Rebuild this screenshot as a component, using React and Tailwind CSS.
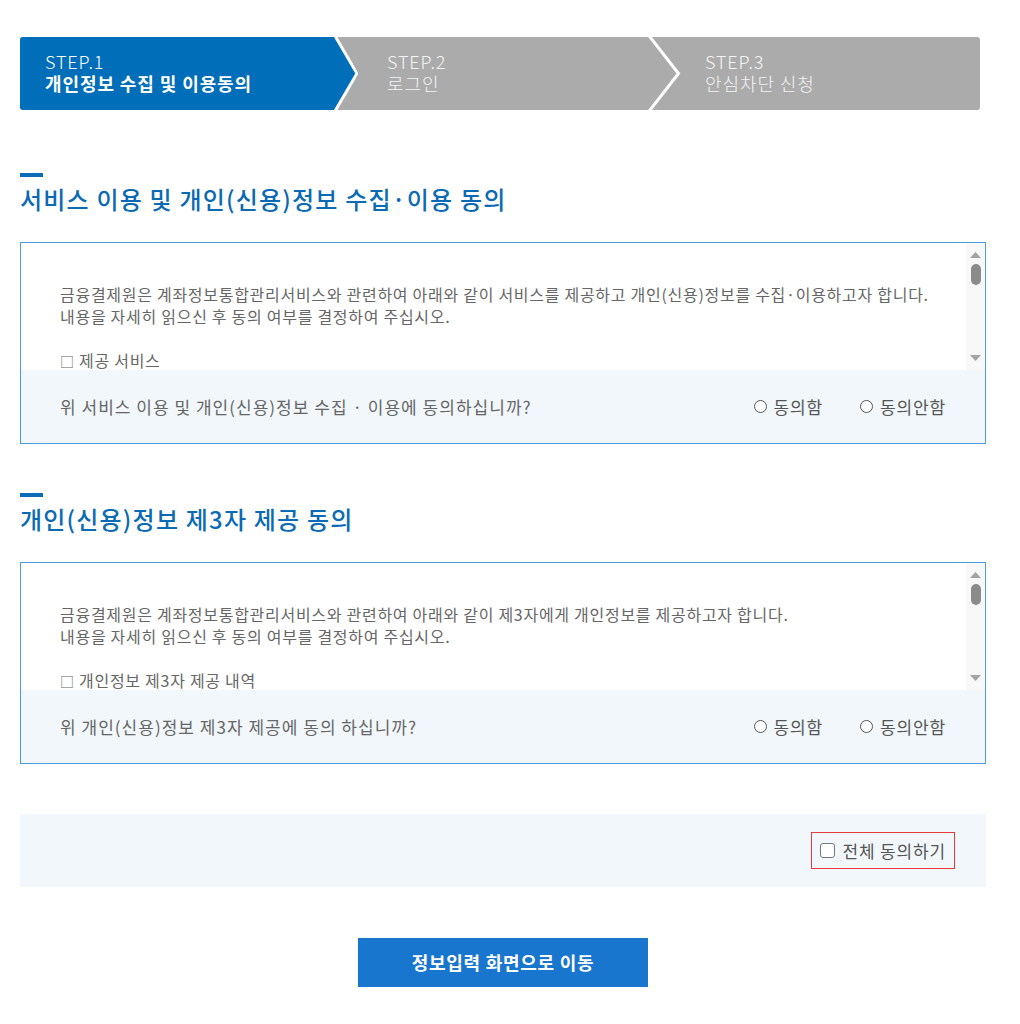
import React from 'react';

const FONT = "font-['Noto_Sans_CJK_KR','Noto_Sans',sans-serif]";

const steps = [
  { no: 'STEP.1', label: '개인정보 수집 및 이용동의', width: 'w-[342px]', active: true },
  { no: 'STEP.2', label: '로그인', width: 'w-[318px]' },
  { no: 'STEP.3', label: '안심차단 신청', width: 'flex-1' },
];

const StepBar = () => (
  <div className="relative flex h-[73px] w-[960px] overflow-hidden rounded-[3px] bg-[#ababab]">
    {steps.map((s) =>
      s.active ? (
        <div
          key={s.no}
          className={`${s.width} flex flex-col justify-center bg-[#006eb9] pb-[4px] pl-[25px] text-white [clip-path:polygon(0_0,316px_0,339px_50%,316px_100%,0_100%)]`}
        >
          <span className="text-[18px] leading-[22px] font-light tracking-[0.05em]">{s.no}</span>
          <span className="text-[18px] leading-[22px] font-bold tracking-[0.05em]">{s.label}</span>
        </div>
      ) : (
        <div key={s.no} className={`${s.width} flex flex-col justify-center pb-[4px] pl-[25px] text-[#f4f4f4]`}>
          <span className="text-[18px] leading-[22px] font-light tracking-[0.05em]">{s.no}</span>
          <span className="text-[18px] leading-[22px] font-light tracking-[0.05em]">{s.label}</span>
        </div>
      )
    )}
    {/* white chevrons between the steps */}
    <svg className="pointer-events-none absolute inset-0" width="960" height="73" viewBox="0 0 960 73">
      <polyline points="314.5,-2 337,36.5 314.5,75" fill="none" stroke="#fff" strokeWidth="3" />
      <polyline points="628.5,-2 658.5,36.5 628.5,75" fill="none" stroke="#fff" strokeWidth="3" />
    </svg>
  </div>
);

const SectionTitle = ({ children }) => (
  <div>
    <div className="h-[4px] w-[23px] bg-[#0b6db8]" />
    <h2 className="mt-[6px] text-[24px] leading-[32px] font-medium tracking-[0.05em] text-[#0b6ab4]">{children}</h2>
  </div>
);

const FakeScrollbar = () => (
  <div className="flex w-[19px] flex-col items-center bg-[#f8f8f8]">
    <svg className="mt-[9px]" width="11" height="6" viewBox="0 0 11 6">
      <path d="M0 6 L5.5 0 L11 6 Z" fill="#a3a3a3" />
    </svg>
    <div className="mt-[6px] h-[21px] w-[10px] rounded-full bg-[#8a8a8a]" />
    <div className="flex-1" />
    <svg className="mb-[9px]" width="11" height="6" viewBox="0 0 11 6">
      <path d="M0 0 L11 0 L5.5 6 Z" fill="#a3a3a3" />
    </svg>
  </div>
);

const Radio = ({ label }) => (
  <label className="flex items-center gap-[7px] text-[17px] tracking-[0.05em] text-[#555]">
    <span className="h-[13px] w-[13px] rounded-full border border-[#555] bg-white" />
    {label}
  </label>
);

const AgreeBox = ({ lines, item, question }) => (
  <div className="mt-[27px] border border-[#4b9bdc]">
    <div className="flex h-[127px]">
      <div className="flex-1 overflow-hidden pl-[39px] pt-[40px] text-[16px] leading-[22px] tracking-[0.045em] text-[#666]">
        {lines.map((l) => (
          <p key={l}>{l}</p>
        ))}
        <p className="mt-[22px]">
          <span className="text-[14px]">□</span> {item}
        </p>
      </div>
      <FakeScrollbar />
    </div>
    <div className="flex h-[73px] items-center justify-between bg-[#f1f7fb] pl-[39px] pr-[39px]">
      <span className="text-[17px] tracking-[0.06em] text-[#666]">{question}</span>
      <div className="flex items-center gap-[37px]">
        <Radio label="동의함" />
        <Radio label="동의안함" />
      </div>
    </div>
  </div>
);

export default function App() {
  return (
    <div className={`${FONT} min-h-[1024px] bg-white pl-[20px] pt-[37px]`}>
      <div className="w-[966px]">
        <StepBar />

        <div className="mt-[63px]">
          <SectionTitle>서비스 이용 및 개인(신용)정보 수집·이용 동의</SectionTitle>
          <AgreeBox
            lines={[
              '금융결제원은 계좌정보통합관리서비스와 관련하여 아래와 같이 서비스를 제공하고 개인(신용)정보를 수집·이용하고자 합니다.',
              '내용을 자세히 읽으신 후 동의 여부를 결정하여 주십시오.',
            ]}
            item="제공 서비스"
            question="위 서비스 이용 및 개인(신용)정보 수집 · 이용에 동의하십니까?"
          />
        </div>

        <div className="mt-[49px]">
          <SectionTitle>개인(신용)정보 제3자 제공 동의</SectionTitle>
          <AgreeBox
            lines={[
              '금융결제원은 계좌정보통합관리서비스와 관련하여 아래와 같이 제3자에게 개인정보를 제공하고자 합니다.',
              '내용을 자세히 읽으신 후 동의 여부를 결정하여 주십시오.',
            ]}
            item="개인정보 제3자 제공 내역"
            question="위 개인(신용)정보 제3자 제공에 동의 하십니까?"
          />
        </div>

        <div className="mt-[50px] flex h-[73px] items-center justify-end bg-[#f1f7fb] pr-[31px]">
          <label className="flex h-[37px] items-center gap-[7px] border border-[#e8393c] pl-[8px] pr-[8px] text-[17px] tracking-[0.05em] text-[#555]">
            <span className="h-[15px] w-[15px] rounded-[3px] border-[1.5px] border-[#777] bg-white" />
            전체 동의하기
          </label>
        </div>

        <div className="mt-[51px] flex justify-center">
          <button className="h-[49px] w-[290px] bg-[#1976cf] text-[18px] font-bold tracking-[0.04em] text-white">
            정보입력 화면으로 이동
          </button>
        </div>
      </div>
    </div>
  );
}
